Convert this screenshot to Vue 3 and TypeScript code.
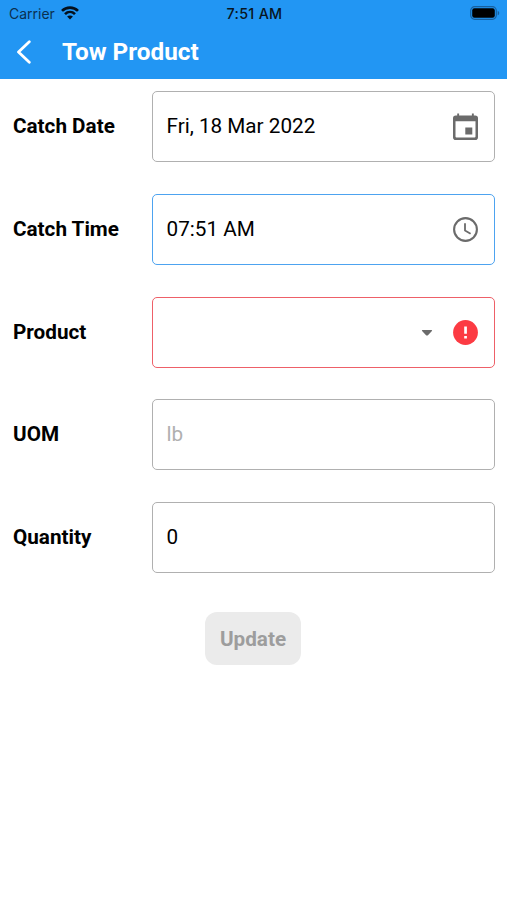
<script setup lang="ts">
type Icon = 'calendar' | 'clock' | 'error'

interface Field {
  label: string
  value: string
  state?: 'focused' | 'invalid' | 'disabled'
  dropdown?: boolean
  icon?: Icon
}

const fields: Field[] = [
  { label: 'Catch Date', value: 'Fri, 18 Mar 2022', icon: 'calendar' },
  { label: 'Catch Time', value: '07:51 AM', state: 'focused', icon: 'clock' },
  { label: 'Product', value: '', state: 'invalid', dropdown: true, icon: 'error' },
  { label: 'UOM', value: 'lb', state: 'disabled' },
  { label: 'Quantity', value: '0' },
]
</script>

<template>
  <div class="screen">
    <header class="header">
      <div class="status">
        <div class="carrier">
          <span class="carrier-name">Carrier</span>
          <svg class="wifi" viewBox="0 0 18 14" fill="none" stroke="#04101c" stroke-width="2.7">
            <path d="M1 4.900C5.500.5 12.500.5 17 4.900" />
            <path d="M4 8.100C6.900 5.300 11.100 5.300 14 8.100" />
            <path d="M9 13.500 6.100 10.600C7.700 9.100 10.300 9.100 11.900 10.600Z" fill="#04101c" stroke="none" />
          </svg>
        </div>
        <span class="clock">7:51 AM</span>
        <svg class="battery" viewBox="0 0 30 14">
          <rect x="0.700" y="0.700" width="25.600" height="12.600" rx="4" fill="none" stroke="#17609f" stroke-width="1.200" />
          <rect x="2.200" y="2.200" width="22.600" height="9.600" rx="2.200" fill="#000" />
          <path d="M27.700 4.700c2 .8 2 3.800 0 4.600z" fill="#17609f" />
        </svg>
      </div>
      <div class="nav">
        <svg class="back" viewBox="0 0 16 24" fill="none" stroke="#fff" stroke-width="2.800" stroke-linecap="round" stroke-linejoin="round">
          <path d="M13.300 1.800 2.500 12l10.800 10.200" />
        </svg>
        <h1 class="title">Tow Product</h1>
      </div>
    </header>

    <main class="form">
      <div v-for="field in fields" :key="field.label" class="row">
        <span class="label">{{ field.label }}</span>
        <div class="field" :class="field.state">
          <span class="value">{{ field.value }}</span>
          <svg v-if="field.dropdown" class="caret" viewBox="0 0 12 8">
            <path d="M1.500 1h9q1 0 .4.900L7.200 5.900q-1.200 1.200-2.400 0L1.100 1.900Q.5 1 1.500 1z" fill="#6b6b6b" />
          </svg>
          <svg v-if="field.icon === 'calendar'" class="icon calendar" viewBox="0 0 25 27" fill="#6b6b6b">
            <path fill-rule="evenodd" d="M2.800 2.500h19.400Q25 2.500 25 5.300v18.900q0 2.800-2.800 2.800H2.800Q0 27 0 24.200V5.300Q0 2.500 2.800 2.500zM2.500 8.300v15.200q0 1 1 1h18q1 0 1-1V8.300z" />
            <path d="M4.200.4h1.900v3H4.200zM18.900.4h1.900v3h-1.900zM12.300 14.600h7v7h-7z" />
          </svg>
          <svg v-else-if="field.icon === 'clock'" class="icon" viewBox="0 0 25 25" fill="none" stroke="#6b6b6b">
            <circle cx="12.500" cy="12.500" r="11.400" stroke-width="2.100" />
            <path d="M12 6.300v7.200l5.600 3.300" stroke-width="1.800" />
          </svg>
          <svg v-else-if="field.icon === 'error'" class="icon" viewBox="0 0 25 25">
            <circle cx="12.500" cy="12.500" r="12.400" fill="#fc3b43" />
            <path d="M11.200 6.500h2.700v7.300h-2.700zM11.200 16h2.700v2.600h-2.700z" fill="#fff" />
          </svg>
        </div>
      </div>
      <button class="update" type="button" disabled>Update</button>
    </main>
  </div>
</template>

<style>
body {
  margin: 0;
  background: #fff;
}
</style>

<style scoped>
.screen {
  width: 507px;
  height: 900px;
  overflow: hidden;
  background: #fff;
  color: #000;
  font-family: Roboto, "Liberation Sans", sans-serif;
}

.header {
  box-sizing: border-box;
  height: 79px;
  background: #2296f3;
}

.status {
  display: grid;
  grid-template-columns: 1fr auto 1fr;
  align-items: center;
  height: 27px;
  padding: 0 7px 0 9px;
  font-family: Inter, "Liberation Sans", sans-serif;
  font-size: 14px;
  color: #081522;
}

.carrier {
  display: flex;
  align-items: center;
  gap: 6px;
}

.carrier-name {
  color: #0b3050;
}

.wifi {
  width: 18px;
  height: 14px;
  margin-bottom: 1px;
}

.clock {
  font-size: 14.300px;
  font-weight: 500;
  letter-spacing: 0.300px;
}

.battery {
  justify-self: end;
  width: 30px;
  height: 14px;
  margin-bottom: 1px;
}

.nav {
  display: flex;
  align-items: center;
  gap: 30px;
  height: 50px;
  padding-left: 16px;
}

.back {
  width: 16px;
  height: 24px;
}

.title {
  margin: 0;
  color: #fff;
  font-size: 24.300px;
  font-weight: 700;
  line-height: 28px;
}

.form {
  display: flex;
  flex-direction: column;
  gap: 31.700px;
  padding: 12.300px 12px 0 13px;
}

.row {
  display: grid;
  grid-template-columns: 138.500px 1fr;
  align-items: center;
}

.label {
  font-size: 20.700px;
  font-weight: 700;
  line-height: 25px;
}

.field {
  display: flex;
  box-sizing: border-box;
  align-items: center;
  height: 71px;
  padding: 0 15.600px 0 14px;
  border: 1.400px solid #b0b0b0;
  border-radius: 5px;
  font-size: 20.700px;
  line-height: 25px;
}

.value {
  flex: 1;
}

.icon {
  width: 25px;
  height: 25px;
}

.calendar {
  height: 27px;
}

.caret {
  width: 12px;
  height: 8px;
  margin: 1px 20.500px 0 0;
}

.focused {
  border-color: #4da3f0;
}

.invalid {
  border-color: #ee6068;
}

.disabled .value {
  color: #b0b0b0;
}

.update {
  align-self: center;
  width: 96px;
  height: 53px;
  margin: 7px 2px 0 0;
  padding: 1px 0 0;
  border: 0;
  border-radius: 12px;
  background: #ebebeb;
  color: #9d9d9d;
  font: 700 20.700px Roboto, "Liberation Sans", sans-serif;
}
</style>
